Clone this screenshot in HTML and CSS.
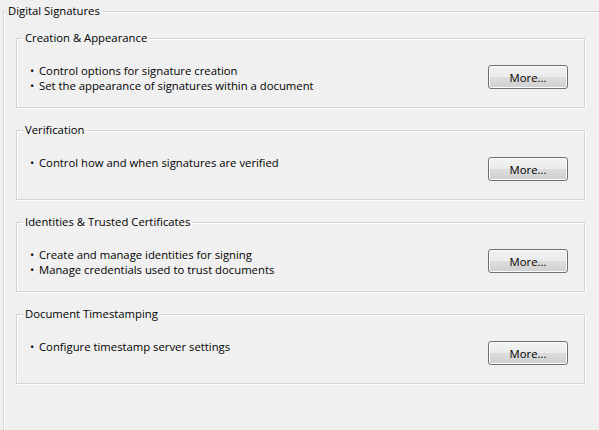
FILE: index.html
```html
<!DOCTYPE html>
<html>
<head>
<meta charset="utf-8">
<link rel="stylesheet" href="styles.css">
</head>
<body>
<fieldset class="group outer">
  <legend class="outer-title">Digital Signatures</legend>

  <fieldset class="group section">
    <legend class="section-title">Creation &amp; Appearance</legend>
    <div class="row">
      <ul class="bullets">
        <li>Control options for signature creation</li>
        <li>Set the appearance of signatures within a document</li>
      </ul>
      <button class="more" type="button">More...</button>
    </div>
  </fieldset>

  <fieldset class="group section">
    <legend class="section-title">Verification</legend>
    <div class="row">
      <ul class="bullets">
        <li>Control how and when signatures are verified</li>
      </ul>
      <button class="more" type="button">More...</button>
    </div>
  </fieldset>

  <fieldset class="group section">
    <legend class="section-title">Identities &amp; Trusted Certificates</legend>
    <div class="row">
      <ul class="bullets">
        <li>Create and manage identities for signing</li>
        <li>Manage credentials used to trust documents</li>
      </ul>
      <button class="more" type="button">More...</button>
    </div>
  </fieldset>

  <fieldset class="group section">
    <legend class="section-title">Document Timestamping</legend>
    <div class="row">
      <ul class="bullets">
        <li>Configure timestamp server settings</li>
      </ul>
      <button class="more" type="button">More...</button>
    </div>
  </fieldset>
</fieldset>
</body>
</html>
```

FILE: styles.css
```css
html, body {
  margin: 0;
  padding: 0;
  overflow: hidden;
  background: #f0f0f0;
  height: 100%;
}

body {
  font-family: "Open Sans", "Noto Sans", sans-serif;
  font-size: 11.3px;
  color: #000;
}

.group {
  border: 1px solid #d5d5d5;
  box-shadow: inset 1px 1px 0 #ffffff, 1px 1px 0 #ffffff;
  min-width: 0;
  padding: 0;
}

.outer {
  margin: 3px 0 0 3px;
  width: 640px;
  height: 600px;
  box-sizing: border-box;
}

.outer-title {
  margin-left: 2px;
  padding: 0 2px;
  line-height: 16px;
  background: #f0f0f0;
}

.section {
  margin: 11px 0 0 12px;
  width: 569px;
  box-sizing: border-box;
}

.section + .section {
  margin-top: 14px;
}

.section-title {
  margin-left: 6px;
  padding: 0 2px;
  line-height: 16px;
  background: #f0f0f0;
}

.row {
  display: flex;
  justify-content: space-between;
  align-items: flex-start;
  height: 61px;
  box-sizing: border-box;
  padding: 17px 16px 0 13px;
}

.bullets {
  list-style: none;
  margin: 0;
  padding: 0;
  line-height: 15px;
}

.bullets li::before {
  content: "\2022";
  display: inline-block;
  width: 9px;
}

.more {
  margin-top: 2px;
  width: 80px;
  height: 24px;
  padding: 0;
  font-family: inherit;
  font-size: 11.3px;
  color: #000;
  border: 1px solid #707070;
  border-radius: 3px;
  background: linear-gradient(#f2f2f2 0%, #ebebeb 50%, #dddddd 50%, #cfcfcf 100%);
  box-shadow: inset 0 0 0 1px #fbfbfb;
}
```
